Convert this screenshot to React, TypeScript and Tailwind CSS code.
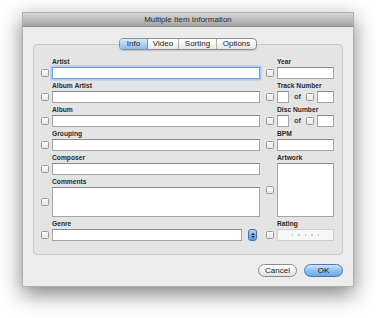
import React from "react";

const font = { fontFamily: '"Liberation Sans", Arial, sans-serif' };

function Check() {
  return (
    <div className="w-[8px] h-[8px] shrink-0 rounded-[1.5px] border border-[#9c9c9c] bg-gradient-to-b from-white to-[#e4e4e4]" />
  );
}

function Field({ className = "", focus = false }: { className?: string; focus?: boolean }) {
  return (
    <div
      className={
        "h-[12px] bg-white border " +
        (focus
          ? "border-[#6f9fdc] shadow-[0_0_0_1.5px_#a9caf2] "
          : "border-[#a6a6a6] border-t-[#8a8a8a] ") +
        className
      }
    />
  );
}

function Label({ children }: { children: React.ReactNode }) {
  return (
    <div className="h-[12px] flex items-end pb-[1px] text-[6.7px] font-bold text-[#2a2a2a] leading-[8px]">
      {children}
    </div>
  );
}

function LeftRow({
  label,
  tall = false,
  focus = false,
  genre = false,
}: {
  label: string;
  tall?: boolean;
  focus?: boolean;
  genre?: boolean;
}) {
  return (
    <div className="flex flex-col">
      <div className="pl-[11px]">
        <Label>{label}</Label>
      </div>
      <div className="flex items-center gap-[3px]">
        <Check />
        {tall ? (
          <div className="h-[30px] w-[208px] bg-white border border-[#a6a6a6] border-t-[#8a8a8a]" />
        ) : genre ? (
          <div className="flex items-center">
            <Field className="w-[190px]" />
            <div className="ml-[6px] w-[9px] h-[12px] rounded-[3px] border border-[#4a72a8] bg-gradient-to-b from-[#b9d6f7] to-[#5d95da] flex flex-col items-center justify-center gap-[1px]">
              <div className="w-0 h-0 border-l-[2px] border-r-[2px] border-b-[2px] border-l-transparent border-r-transparent border-b-[#1b2d48]" />
              <div className="w-0 h-0 border-l-[2px] border-r-[2px] border-t-[2px] border-l-transparent border-r-transparent border-t-[#1b2d48]" />
            </div>
          </div>
        ) : (
          <Field className="w-[208px]" focus={focus} />
        )}
      </div>
    </div>
  );
}

function NumRow({ label }: { label: string }) {
  return (
    <div className="flex flex-col">
      <div className="pl-[11px]">
        <Label>{label}</Label>
      </div>
      <div className="flex items-center">
        <Check />
        <Field className="w-[12px] ml-[3px]" />
        <span className="ml-[5px] text-[7.5px] font-bold text-[#444] leading-none">of</span>
        <div className="ml-[5px]">
          <Check />
        </div>
        <Field className="w-[17px] ml-[3px]" />
      </div>
    </div>
  );
}

function RightRow({ label }: { label: string }) {
  return (
    <div className="flex flex-col">
      <div className="pl-[11px]">
        <Label>{label}</Label>
      </div>
      <div className="flex items-center gap-[3px]">
        <Check />
        <Field className="w-[57px]" />
      </div>
    </div>
  );
}

export default function App() {
  return (
    <div className="w-[376px] h-[318px] bg-white pt-[12px] pl-[22px]" style={font}>
      <div className="w-[332px] h-[275px] flex flex-col bg-[#ececec] shadow-[0_7px_20px_rgba(0,0,0,0.5)] border border-[#b0b0b0]">
        {/* Title bar */}
        <div className="h-[14px] shrink-0 flex items-center justify-center bg-gradient-to-b from-[#d6d6d6] to-[#a4a4a4] border-b border-[#8a8a8a]">
          <span className="text-[8px] text-[#2d2d2d] leading-none">Multiple Item Information</span>
        </div>

        <div className="flex flex-col px-[10px]">
          {/* Tabs */}
          <div className="flex justify-center mt-[11px] relative z-10">
            <div className="flex h-[12px] rounded-[4px] border border-[#8e8e8e] overflow-hidden text-[8px] leading-none text-[#1e1e1e] bg-gradient-to-b from-white to-[#e6e6e6] shadow-[0_1px_1px_rgba(0,0,0,0.15)]">
              <div className="w-[28px] flex items-center justify-center bg-gradient-to-b from-[#d7e8fc] to-[#8dbaf0] border-r border-[#7b94b8]">
                Info
              </div>
              <div className="w-[31px] flex items-center justify-center border-r border-[#b0b0b0]">Video</div>
              <div className="w-[38px] flex items-center justify-center border-r border-[#b0b0b0]">Sorting</div>
              <div className="w-[39px] flex items-center justify-center">Options</div>
            </div>
          </div>

          {/* Group box */}
          <div className="-mt-[6px] w-[310px] h-[211px] rounded-[4px] border border-[#c9c9c9] bg-[#e4e4e4] pt-[10px] pl-[7px] flex gap-[6px]">
            <div className="flex flex-col">
              <LeftRow label="Artist" focus />
              <LeftRow label="Album Artist" />
              <LeftRow label="Album" />
              <LeftRow label="Grouping" />
              <LeftRow label="Composer" />
              <LeftRow label="Comments" tall />
              <LeftRow label="Genre" genre />
            </div>
            <div className="flex flex-col">
              <RightRow label="Year" />
              <NumRow label="Track Number" />
              <NumRow label="Disc Number" />
              <RightRow label="BPM" />
              <div className="flex flex-col">
                <div className="pl-[11px]">
                  <Label>Artwork</Label>
                </div>
                <div className="flex items-center gap-[3px]">
                  <Check />
                  <div className="w-[57px] h-[54px] bg-white border border-[#a6a6a6] border-t-[#8a8a8a]" />
                </div>
              </div>
              <div className="flex flex-col">
                <div className="pl-[11px]">
                  <Label>Rating</Label>
                </div>
                <div className="flex items-center gap-[3px]">
                  <Check />
                  <div className="w-[57px] h-[12px] bg-[#f6f6f6] border border-[#cfcfcf] flex items-center justify-center gap-[5px]">
                    {[0, 1, 2, 3, 4].map((i) => (
                      <div key={i} className="w-[1.5px] h-[1.5px] rounded-full bg-[#b8b8b8]" />
                    ))}
                  </div>
                </div>
              </div>
            </div>
          </div>

          {/* Buttons */}
          <div className="flex justify-end gap-[7px] mt-[9px]">
            <div className="w-[39px] h-[13px] rounded-full border border-[#8c8c8c] bg-gradient-to-b from-white to-[#e2e2e2] flex items-center justify-center text-[8px] leading-none text-[#222]">
              Cancel
            </div>
            <div className="w-[39px] h-[13px] rounded-full border border-[#4c79b4] bg-gradient-to-b from-[#cfe4fb] via-[#8fbff2] to-[#6aa8ea] flex items-center justify-center text-[8px] leading-none text-[#111]">
              OK
            </div>
          </div>
        </div>
      </div>
    </div>
  );
}
